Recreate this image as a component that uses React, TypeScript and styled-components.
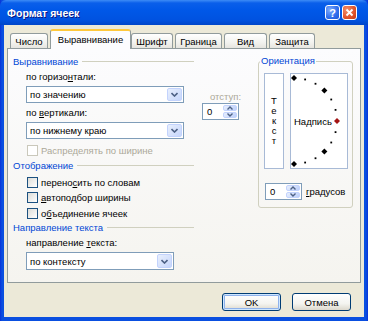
import styled, { createGlobalStyle } from "styled-components";

const GlobalStyle = createGlobalStyle`
  html, body {
    margin: 0;
    padding: 0;
    width: 368px;
    height: 321px;
    overflow: hidden;
  }
  body {
    font-family: "Liberation Sans", Arial, sans-serif;
    font-size: 9.5px;
    color: #000;
  }
`;

const Window = styled.div`
  width: 368px;
  height: 321px;
  box-sizing: border-box;
  display: flex;
  flex-direction: column;
  background: linear-gradient(to right, #0831d9, #0a4fe0 2px, #0a4fe0 calc(100% - 2px), #0831d9);
`;

const TitleBar = styled.div`
  height: 25px;
  flex-shrink: 0;
  display: flex;
  align-items: center;
  padding: 0 11px 0 7px;
  border-radius: 6px 6px 0 0;
  background: linear-gradient(
    180deg,
    #3d8cf6 0%,
    #0a5fea 12%,
    #0058e8 40%,
    #0052e0 80%,
    #0045c8 100%
  );
`;

const Title = styled.div`
  flex: 1;
  color: #fff;
  font-weight: bold;
  font-size: 10.5px;
  text-shadow: 1px 1px 0 #0a1883;
`;

const CaptionButton = styled.div<{ $red?: boolean }>`
  width: 15px;
  height: 15px;
  box-sizing: border-box;
  margin-left: 2px;
  border: 1px solid #fff;
  border-radius: 3px;
  display: flex;
  align-items: center;
  justify-content: center;
  color: #fff;
  font-weight: bold;
  font-size: 11px;
  background: ${(p) =>
    p.$red
      ? "radial-gradient(circle at 30% 30%, #f0906c, #e0532b 60%, #c23a15)"
      : "radial-gradient(circle at 30% 30%, #7eaafc, #2f6eec 60%, #1c53d6)"};
`;

const Body = styled.div`
  flex: 1;
  margin: 0 4px 4px;
  background: #ece9d8;
  padding: 4px 3px 0;
  display: flex;
  flex-direction: column;
`;

const TabsRow = styled.div`
  height: 20px;
  display: flex;
  align-items: flex-end;
  gap: 2px;
  padding-left: 3px;
  position: relative;
  z-index: 2;
`;

const Tab = styled.div<{ $w: number; $active?: boolean }>`
  width: ${(p) => p.$w}px;
  height: ${(p) => (p.$active ? 20 : 15)}px;
  margin-bottom: ${(p) => (p.$active ? 0 : 1)}px;
  margin-right: ${(p) => (p.$active ? -2 : 0)}px;
  box-sizing: border-box;
  border: 1px solid #919b9c;
  border-bottom: none;
  border-top: ${(p) => (p.$active ? "2px solid #ffc83c" : "1px solid #919b9c")};
  border-radius: 3px 3px 0 0;
  background: ${(p) =>
    p.$active ? "#fcfcfe" : "linear-gradient(#ffffff, #f3f3ef 60%, #e6e5df)"};
  display: flex;
  align-items: center;
  justify-content: center;
  padding-bottom: ${(p) => (p.$active ? 2 : 0)}px;
  white-space: nowrap;
`;

const Panel = styled.div`
  margin-top: -1px;
  height: 235px;
  box-sizing: border-box;
  border: 1px solid #919b9c;
  background: linear-gradient(#fcfcfe, #f5f4ef);
  padding: 6px 7px 0 5px;
  display: flex;
  justify-content: space-between;
  align-items: flex-start;
`;

const LeftCol = styled.div`
  width: 243px;
  display: flex;
  flex-direction: column;
`;

const GroupHeader = styled.div<{ $mt?: number }>`
  width: 181px;
  height: 12px;
  margin-top: ${(p) => p.$mt ?? 0}px;
  display: flex;
  align-items: center;
  gap: 4px;
  color: #0046d5;
  white-space: nowrap;
  &::after {
    content: "";
    flex: 1;
    height: 1px;
    background: #d0d0bf;
  }
`;

const Label = styled.div<{ $mt?: number; $disabled?: boolean }>`
  height: 12px;
  line-height: 12px;
  margin-top: ${(p) => p.$mt ?? 0}px;
  color: ${(p) => (p.$disabled ? "#aca899" : "#000")};
  white-space: nowrap;
`;

const Indent = styled.div`
  margin-left: 13px;
  display: flex;
  flex-direction: column;
`;

const AlignRow = styled.div`
  display: flex;
  margin-left: 13px;
  margin-top: 4px;
`;

const ComboCol = styled.div`
  width: 158px;
  display: flex;
  flex-direction: column;
`;

const IndentCol = styled.div`
  margin-left: 18px;
  padding-top: 20px;
  display: flex;
  flex-direction: column;
  ${Label} {
    margin-left: 8px;
  }
`;

const Combo = styled.div<{ $w: number; $h: number; $mt?: number }>`
  width: ${(p) => p.$w}px;
  height: ${(p) => p.$h}px;
  margin-top: ${(p) => p.$mt ?? 0}px;
  box-sizing: border-box;
  border: 1px solid #7f9db9;
  background: #fff;
  display: flex;
  align-items: center;
  justify-content: space-between;
  padding-left: 3px;
  white-space: nowrap;
`;

const DropButton = styled.div`
  width: 15px;
  align-self: stretch;
  margin: 1px;
  box-sizing: border-box;
  border: 1px solid #c3d3fd;
  border-radius: 2px;
  background: linear-gradient(135deg, #e8effd, #c6d6fb);
  display: flex;
  align-items: center;
  justify-content: center;
`;

const Spin = styled.div<{ $w: number }>`
  width: ${(p) => p.$w}px;
  height: 17px;
  box-sizing: border-box;
  border: 1px solid #7f9db9;
  background: #fff;
  display: flex;
  align-items: center;
  justify-content: space-between;
  padding-left: 4px;
`;

const SpinButtons = styled.div`
  width: 14px;
  align-self: stretch;
  margin: 1px;
  display: flex;
  flex-direction: column;
  gap: 1px;
`;

const SpinHalf = styled.div`
  flex: 1;
  border-radius: 2px;
  background: linear-gradient(135deg, #e8effd, #bccffa);
  border: 1px solid #c3d3fd;
  box-sizing: border-box;
  display: flex;
  align-items: center;
  justify-content: center;
`;

const CheckRow = styled.div<{ $mt?: number; $disabled?: boolean }>`
  height: 12px;
  margin-top: ${(p) => p.$mt ?? 0}px;
  margin-left: 14px;
  display: flex;
  align-items: center;
  gap: 3px;
  color: ${(p) => (p.$disabled ? "#aca899" : "#000")};
  white-space: nowrap;
`;

const CheckBox = styled.div<{ $disabled?: boolean }>`
  width: 11px;
  height: 11px;
  box-sizing: border-box;
  border: 1px solid ${(p) => (p.$disabled ? "#cac8bb" : "#1c5180")};
  background: ${(p) =>
    p.$disabled ? "#fff" : "linear-gradient(135deg, #dcdcd7, #ffffff)"};
`;

const Orientation = styled.fieldset`
  width: 95px;
  box-sizing: border-box;
  margin: 0;
  padding: 6px 4px 7px 5px;
  border: 1px solid #d0d0bf;
  border-radius: 3px;
  min-width: 0;
`;

const Legend = styled.legend`
  padding: 0 1px;
  margin-left: -4px;
  height: 12px;
  line-height: 12px;
  color: #0046d5;
`;

const OrientRow = styled.div`
  display: flex;
  gap: 6px;
`;

const VertBox = styled.div`
  width: 20px;
  height: 96px;
  box-sizing: border-box;
  border: 1px solid #a8bad6;
  background: #fff;
  display: flex;
  flex-direction: column;
  align-items: center;
  justify-content: center;
  line-height: 10px;
`;

const ArcBox = styled.div`
  width: 58px;
  height: 96px;
  box-sizing: border-box;
  border: 1px solid #a8bad6;
  background: #fff;
  position: relative;
  display: flex;
  align-items: center;
  padding-left: 3px;
  padding-top: 1px;
`;

const ArcDrawing = styled.svg`
  position: absolute;
  left: 0;
  top: 0;
`;

const DegreesRow = styled.div`
  display: flex;
  align-items: center;
  gap: 4px;
  margin-top: 14px;
  margin-left: 1px;
`;

const ButtonsRow = styled.div`
  display: flex;
  justify-content: flex-end;
  gap: 11px;
  margin-top: 10px;
  padding-right: 10px;
`;

const Button = styled.div<{ $default?: boolean }>`
  width: 59px;
  height: 18px;
  box-sizing: border-box;
  border: 1px solid #003c74;
  border-radius: 3px;
  background: linear-gradient(#ffffff, #f4f4f0 60%, #dcd8cc);
  display: flex;
  align-items: center;
  justify-content: center;
  box-shadow: ${(p) =>
    p.$default ? "inset 0 0 0 1px #cee7ff, inset 0 0 0 2px #8fb2eb" : "none"};
`;

const Chevron = ({ up }: { up?: boolean }) => (
  <svg width="7" height="5" viewBox="0 0 7 5">
    <path
      d={up ? "M0.5 4 L3.5 1 L6.5 4" : "M0.5 1 L3.5 4 L6.5 1"}
      fill="none"
      stroke="#4d6185"
      strokeWidth="1.6"
    />
  </svg>
);

const SmallChevron = ({ up }: { up?: boolean }) => (
  <svg width="6" height="4" viewBox="0 0 6 4">
    <path
      d={up ? "M0.5 3.5 L3 1 L5.5 3.5" : "M0.5 0.5 L3 3 L5.5 0.5"}
      fill="none"
      stroke="#4d6185"
      strokeWidth="1.4"
    />
  </svg>
);

const ArcDots = () => {
  const cx = 3;
  const cy = 47;
  const r = 43;
  const items = [];
  for (let a = -90; a <= 90; a += 15) {
    const rad = (a * Math.PI) / 180;
    const x = cx + r * Math.cos(rad);
    const y = cy - r * Math.sin(rad);
    if (a % 45 === 0) {
      const s = 3;
      items.push(
        <polygon
          key={a}
          points={`${x},${y - s} ${x + s},${y} ${x},${y + s} ${x - s},${y}`}
          fill={a === 0 ? "#a31414" : "#000"}
        />
      );
    } else {
      items.push(<rect key={a} x={x - 0.9} y={y - 0.9} width="1.8" height="1.8" fill="#000" />);
    }
  }
  return (
    <ArcDrawing width="56" height="94" viewBox="0 0 56 94">
      {items}
    </ArcDrawing>
  );
};

const U = styled.span`
  text-decoration: underline;
`;

const tabs = [
  { name: "Число", w: 38 },
  { name: "Выравнивание", w: 81, active: true },
  { name: "Шрифт", w: 42 },
  { name: "Граница", w: 47 },
  { name: "Вид", w: 43 },
  { name: "Защита", w: 46 },
];

export default function App() {
  return (
    <>
      <GlobalStyle />
      <Window>
        <TitleBar>
          <Title>Формат ячеек</Title>
          <CaptionButton>?</CaptionButton>
          <CaptionButton $red>
            <svg width="9" height="9" viewBox="0 0 9 9">
              <path d="M1.5 1.5 L7.5 7.5 M7.5 1.5 L1.5 7.5" stroke="#fff" strokeWidth="1.8" />
            </svg>
          </CaptionButton>
        </TitleBar>
        <Body>
          <TabsRow>
            {tabs.map((t) => (
              <Tab key={t.name} $w={t.w} $active={t.active}>
                {t.name}
              </Tab>
            ))}
          </TabsRow>
          <Panel>
            <LeftCol>
              <GroupHeader>Выравнивание</GroupHeader>
              <AlignRow>
                <ComboCol>
                  <Label>
                    по горизо<U>н</U>тали:
                  </Label>
                  <Combo $w={158} $h={17} $mt={3}>
                    по значению
                    <DropButton>
                      <Chevron />
                    </DropButton>
                  </Combo>
                  <Label $mt={4}>
                    по <U>в</U>ертикали:
                  </Label>
                  <Combo $w={158} $h={17} $mt={3}>
                    по нижнему краю
                    <DropButton>
                      <Chevron />
                    </DropButton>
                  </Combo>
                </ComboCol>
                <IndentCol>
                  <Label $disabled>отступ:</Label>
                  <Spin $w={37}>
                    0
                    <SpinButtons>
                      <SpinHalf>
                        <SmallChevron up />
                      </SpinHalf>
                      <SpinHalf>
                        <SmallChevron />
                      </SpinHalf>
                    </SpinButtons>
                  </Spin>
                </IndentCol>
              </AlignRow>
              <CheckRow $mt={5} $disabled>
                <CheckBox $disabled />
                Распределять по ширине
              </CheckRow>
              <GroupHeader $mt={3}>Отображение</GroupHeader>
              <CheckRow $mt={5}>
                <CheckBox />
                <span>
                  перено<U>с</U>ить по словам
                </span>
              </CheckRow>
              <CheckRow $mt={3}>
                <CheckBox />
                <span>
                  <U>а</U>втоподбор ширины
                </span>
              </CheckRow>
              <CheckRow $mt={4}>
                <CheckBox />
                <span>
                  о<U>б</U>ъединение ячеек
                </span>
              </CheckRow>
              <GroupHeader $mt={2}>Направление текста</GroupHeader>
              <Indent>
                <Label $mt={4}>
                  направление <U>т</U>екста:
                </Label>
                <Combo $w={148} $h={18} $mt={3}>
                  по контексту
                  <DropButton>
                    <Chevron />
                  </DropButton>
                </Combo>
              </Indent>
            </LeftCol>
            <Orientation>
              <Legend>Ориентация</Legend>
              <OrientRow>
                <VertBox>
                  <span>Т</span>
                  <span>е</span>
                  <span>к</span>
                  <span>с</span>
                  <span>т</span>
                </VertBox>
                <ArcBox>
                  <ArcDots />
                  Надпись
                </ArcBox>
              </OrientRow>
              <DegreesRow>
                <Spin $w={37}>
                  0
                  <SpinButtons>
                    <SpinHalf>
                      <SmallChevron up />
                    </SpinHalf>
                    <SpinHalf>
                      <SmallChevron />
                    </SpinHalf>
                  </SpinButtons>
                </Spin>
                <span>
                  <U>г</U>радусов
                </span>
              </DegreesRow>
            </Orientation>
          </Panel>
          <ButtonsRow>
            <Button $default>OK</Button>
            <Button>Отмена</Button>
          </ButtonsRow>
        </Body>
      </Window>
    </>
  );
}
